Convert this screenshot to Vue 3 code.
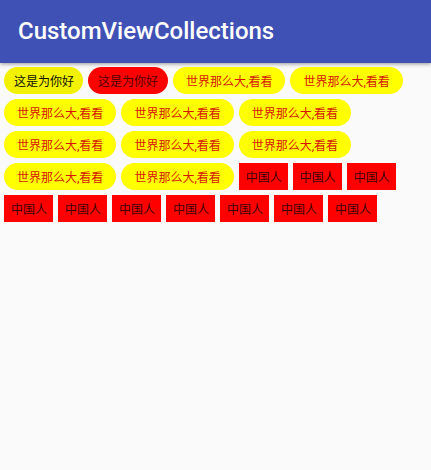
<script setup>
const tags = [
  { text: '这是为你好', kind: 'lemon' },
  { text: '这是为你好', kind: 'cherry' },
  ...Array.from({ length: 10 }, () => ({ text: '世界那么大,看看', kind: 'sun' })),
  ...Array.from({ length: 10 }, () => ({ text: '中国人', kind: 'block' })),
]
</script>

<template>
  <div class="screen">
    <header class="bar">
      <h1 class="title">CustomViewCollections</h1>
    </header>
    <main>
      <ul class="flow">
        <li v-for="(tag, i) in tags" :key="i" class="tag" :class="tag.kind">{{ tag.text }}</li>
      </ul>
    </main>
  </div>
</template>

<style>
body {
  margin: 0;
  background: #fafafa;
}
</style>

<style scoped>
.screen {
  min-height: 100vh;
  background: #fafafa;
  font-family: Roboto, "Noto Sans CJK SC", sans-serif;
}

.bar {
  padding: 17px 18px 18px;
  background: #3f51b5;
  box-shadow: 0 1px 4px rgba(0, 0, 0, 0.4);
}

.title {
  margin: 0;
  color: #fff;
  font-size: 24px;
  font-weight: 500;
  line-height: 28px;
}

.flow {
  display: flex;
  flex-wrap: wrap;
  gap: 5px;
  margin: 0;
  padding: 4px;
  list-style: none;
}

.tag {
  padding: 3px 10px 0;
  font-size: 12px;
  line-height: 24px;
  white-space: nowrap;
}

.lemon {
  padding-right: 9px;
  border-radius: 14px;
  background: #f2f200;
  color: #111100;
}

.cherry {
  border-radius: 14px;
  background: #ff0000;
  color: #4d0000;
}

.sun {
  padding-right: 13px;
  padding-left: 13px;
  border-radius: 14px;
  background: #ffff00;
  color: #d41800;
}

.block {
  padding-right: 6px;
  padding-left: 7px;
  background: #ff0000;
  color: #400000;
}
</style>
